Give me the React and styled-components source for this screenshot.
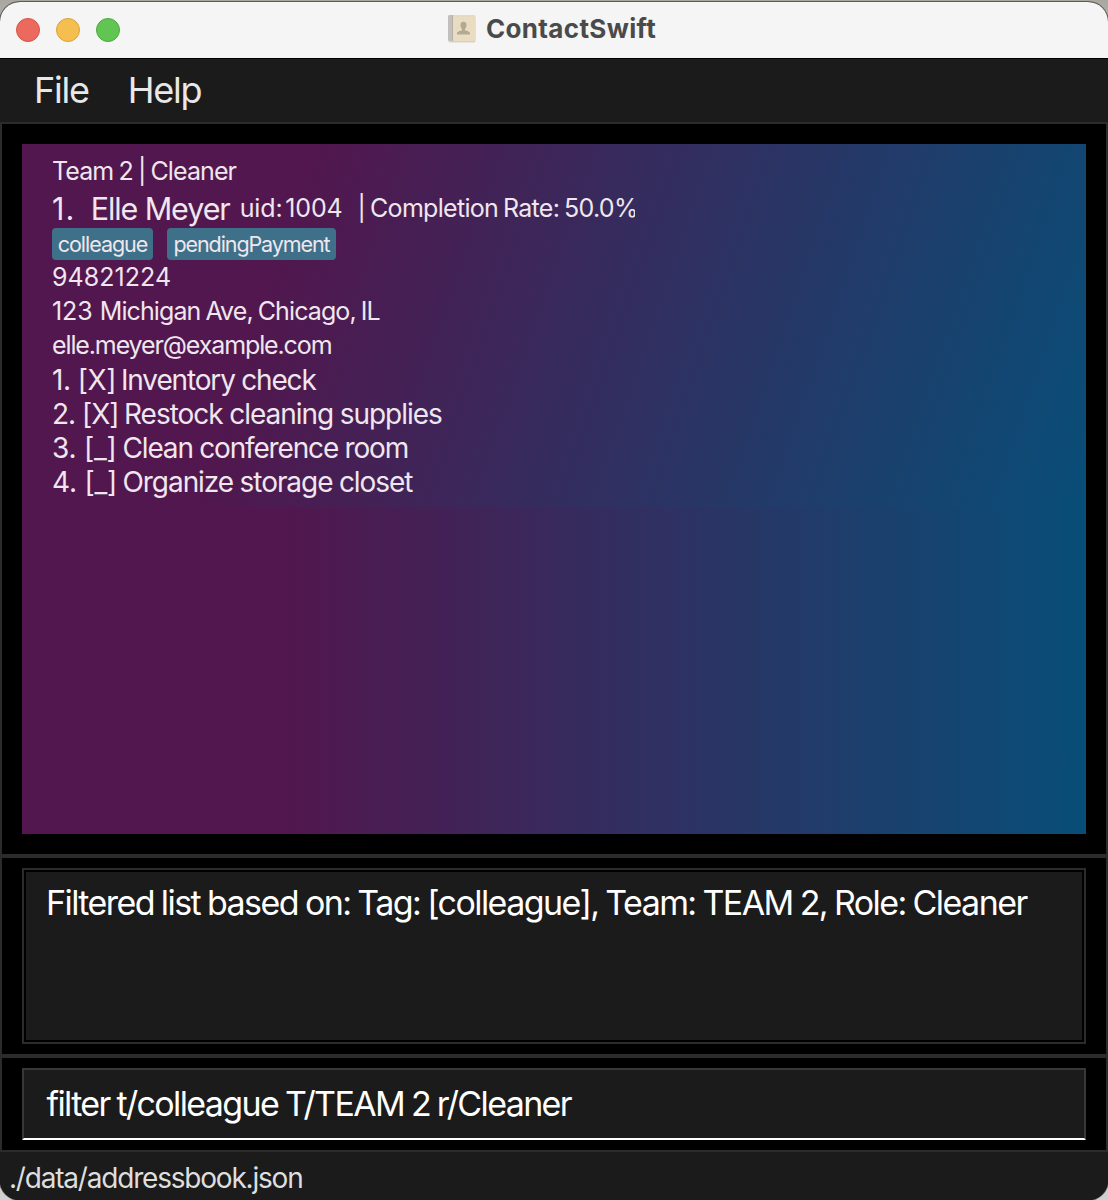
import React from "react";
import styled, { createGlobalStyle } from "styled-components";

const Global = createGlobalStyle`
  *{box-sizing:border-box}
  html,body{margin:0;padding:0}
  body{font-family:Inter,"Liberation Sans",sans-serif;background:linear-gradient(#a9a79f 0,#b5b5b4 30px,#d0d0d0 100%)}
`;
const Desktop = styled.div`
  height:1200px;padding-top:2px;overflow:hidden;
`;
const Window = styled.div`
  height:1198px;display:flex;flex-direction:column;background:#000;border-radius:20px;overflow:hidden;box-shadow:0 0 0 1px #5d5c58;
`;
const TitleBar = styled.header`
  position:relative;height:56px;background:#f5f5f5;display:flex;align-items:center;justify-content:center;gap:9px;flex:none;padding:0 5px 3px 0;
`;
const Lights = styled.div`
  position:absolute;left:16px;top:16px;display:flex;gap:16px;
`;
const Light = styled.i`
  width:24px;height:24px;border-radius:50%;background:${p => p.$fill};border:1px solid ${p => p.$edge};
`;
const T = styled.span`
  display:block;white-space:pre;font-size:${p => p.$size}px;letter-spacing:${p => p.$ls || 0}px;word-spacing:${p => p.$ws || 0}px;font-weight:${p => p.$weight || 400};
`;
const Title = styled(T)`
  color:#4a4a4a;
`;
const MenuBar = styled.nav`
  height:66px;border-top:1px solid #000;border-bottom:2px solid #2b2b2b;background:#1b1b1b;color:#e8e8e8;display:flex;align-items:center;padding:0 0 2px 34px;gap:39px;flex:none;
`;
const Body = styled.main`
  flex:1;display:flex;flex-direction:column;border:solid #2b2b2b;border-width:0 2px;
`;
const Pane = styled.section`
  height:${p => p.$h}px;padding:${p => p.$pad};border-bottom:${p => p.$line}px solid #2b2b2b;flex:none;display:flex;flex-direction:column;
`;
const List = styled.div`
  height:690px;background:linear-gradient(90deg,#51174e 25%,#084e78 100%);
`;
const Card = styled.article`
  height:364px;padding:10px 30px;color:#f0e6ee;background:linear-gradient(108.9deg,#51174e 25%,#084e78 100%);
`;
const Line = styled.div`
  height:${p => p.$h || 34}px;display:flex;align-items:center;padding-top:${p => p.$down || 0}px;
`;
const Rate = styled.div`
  margin-left:15px;width:277px;overflow:hidden;
`;
const Name = styled.div`
  margin:0 10px 0 15.5px;
`;
const Tags = styled.div`
  height:34px;display:flex;gap:14px;padding:2px 0 0;
`;
const Tag = styled.div`
  height:32px;width:${p => p.$w}px;border-radius:4px;background:#3e7189;display:flex;align-items:center;justify-content:center;
`;
const Mark = styled.div`
  width:${p => p.$w}px;
`;
const Result = styled.div`
  height:176px;border:2px solid #2b2b2b;padding:2px;color:#fff;
`;
const ResultText = styled.div`
  height:168px;background:#1b1b1b;padding:10px 20px;
`;
const Command = styled.div`
  height:72px;background:#1b1b1b;border:2px solid #383838;border-bottom-color:#fff;color:#fff;display:flex;align-items:center;padding:0 0 1px 22.5px;
`;
const Status = styled.footer`
  height:48px;background:#1b1b1b;color:#dedede;display:flex;align-items:center;padding:3px 0 0 9px;flex:none;
`;

const BookIcon = () => (
  <svg width="30" height="30" viewBox="0 0 30 30">
    <rect x="1.5" y="2.5" width="27" height="26" rx="1.5" fill="#d6d2cb" />
    <rect x="1" y="1" width="27.500" height="26" rx="1.5" fill="#eadcc0" />
    <path d="M6 2H27.500" stroke="#dcd6ca" />
    <path d="M1 2.5Q1 1 2.500 1H6V27H2.500Q1 27 1 25.500Z" fill="#c3bfbd" />
    <path d="M5.500 1V27" stroke="#b3aeaa" />
    <path d="M10 20.500v-1.5c.5-1.800 3-1.800 5-2.800v-1.200c-1.200-1.300-1.500-2.500-1.500-4 0-2 1.200-3.200 3-3.200s3 1.200 3 3.200c0 1.500-.3 2.700-1.500 4v1.200c2 1 4.500 1 5 2.800v1.500z" fill="#b3a995" />
  </svg>
);

const TASKS = [
  { mark: "1. [X]", markLs: -0.5, width: 69, text: "Inventory check", ls: -1.15 },
  { mark: "2. [X]", markLs: -1, width: 72, text: "Restock cleaning supplies", ls: -1.02 },
  { mark: "3. [_]", markLs: -0.2, width: 70.5, text: "Clean conference room", ls: -1.16 },
  { mark: "4. [_]", markLs: -0.2, width: 70.5, text: "Organize storage closet", ls: -1.06 },
];

export default function App() {
  return (
    <Desktop>
      <Global />
      <Window>
        <TitleBar>
          <Lights>
            <Light $fill="#ec695e" $edge="#d55347" />
            <Light $fill="#f5bf4f" $edge="#d9a23c" />
            <Light $fill="#61c554" $edge="#4bab3d" />
          </Lights>
          <BookIcon />
          <Title $size={26} $weight={700} $ls={0.35}>ContactSwift</Title>
        </TitleBar>
        <MenuBar>
          <T $size={36} $ls={-1.25}>File</T>
          <T $size={36} $ls={-1.25}>Help</T>
        </MenuBar>
        <Body>
          <Pane $h={734} $pad="20px 20px 0" $line={4}>
            <List>
              <Card>
                <Line><T $size={25} $ls={-0.9} $ws={-1}>Team 2 | Cleaner</T></Line>
                <Line $h={38} $down={2}>
                  <T $size={30.5} $ls={1}>1.</T>
                  <Name><T $size={30.5} $ls={-1.1}>Elle Meyer</T></Name>
                  <T $size={25} $ls={-0.15} $ws={-4}>uid: 1004</T>
                  <Rate><T $size={25} $ls={-0.7} $ws={-1.5}>| Completion Rate: 50.0%</T></Rate>
                </Line>
                <Tags>
                  <Tag $w={101}><T $size={21.5} $ls={-1.05}>colleague</T></Tag>
                  <Tag $w={169}><T $size={21.5} $ls={-1.1}>pendingPayment</T></Tag>
                </Tags>
                <Line><T $size={25} $ls={0.05}>94821224</T></Line>
                <Line>
                  <T $size={25} $ls={-0.05}>123 </T>
                  <T $size={25} $ls={-0.9} $ws={-1.1}>Michigan Ave, Chicago, IL</T>
                </Line>
                <Line><T $size={25} $ls={-1.12}>elle.meyer@example.com</T></Line>
                {TASKS.map(t => (
                  <Line key={t.text} $down={2}>
                    <Mark $w={t.width}><T $size={28} $ls={t.markLs}>{t.mark}</T></Mark>
                    <T $size={28} $ls={t.ls} $ws={-0.3}>{t.text}</T>
                  </Line>
                ))}
              </Card>
            </List>
          </Pane>
          <Pane $h={200} $pad="10px 20px 0" $line={4}>
            <Result><ResultText><T $size={34} $ls={-1.57} $ws={-1.1}>Filtered list based on: Tag: [colleague], Team: TEAM 2, Role: Cleaner</T></ResultText></Result>
          </Pane>
          <Pane $h={94} $pad="10px 20px 0" $line={2}>
            <Command><T $size={34} $ls={-1.63} $ws={-1.2}>filter t/colleague T/TEAM 2 r/Cleaner</T></Command>
          </Pane>
        </Body>
        <Status><T $size={28} $ls={-1.2}>./data/addressbook.json</T></Status>
      </Window>
    </Desktop>
  );
}
